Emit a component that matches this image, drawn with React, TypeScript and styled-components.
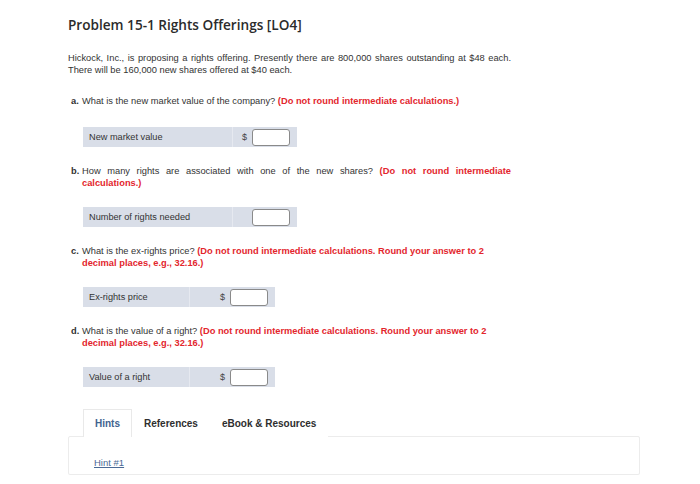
import styled, { createGlobalStyle } from "styled-components";

type Question = {
	letter: string;
	text: string;
	note: string;
	justify: boolean;
	label: string;
	dollar: boolean;
	labelWidth: number;
	cellWidth: number;
};

const questions: Question[] = [
	{
		letter: "a.",
		text: "What is the new market value of the company?",
		note: "(Do not round intermediate calculations.)",
		justify: false,
		label: "New market value",
		dollar: true,
		labelWidth: 150,
		cellWidth: 64,
	},
	{
		letter: "b.",
		text: "How many rights are associated with one of the new shares?",
		note: "(Do not round intermediate calculations.)",
		justify: true,
		label: "Number of rights needed",
		dollar: false,
		labelWidth: 150,
		cellWidth: 64,
	},
	{
		letter: "c.",
		text: "What is the ex-rights price?",
		note: "(Do not round intermediate calculations. Round your answer to 2 decimal places, e.g., 32.16.)",
		justify: false,
		label: "Ex-rights price",
		dollar: true,
		labelWidth: 107,
		cellWidth: 85,
	},
	{
		letter: "d.",
		text: "What is the value of a right?",
		note: "(Do not round intermediate calculations. Round your answer to 2 decimal places, e.g., 32.16.)",
		justify: false,
		label: "Value of a right",
		dollar: true,
		labelWidth: 107,
		cellWidth: 85,
	},
];

const GlobalStyle = createGlobalStyle`
  body {
    margin: 0;
    background: #ffffff;
    font-family: "Liberation Sans", Arial, sans-serif;
    color: #333333;
  }
`;

const Page = styled.div`
  padding: 15px 0 0 68px;
  width: 572px;
`;

const Title = styled.h1`
  margin: 0;
  font-family: "Open Sans", "Liberation Sans", sans-serif;
  font-size: 13.6px;
  font-weight: 600;
  line-height: 20px;
  color: #2b2b2b;
`;

const Intro = styled.p`
  margin: 17px 0 0;
  width: 443px;
  font-size: 9.3px;
  line-height: 12px;
  text-align: justify;
`;

const QuestionBlock = styled.div<{ $first: boolean }>`
  display: flex;
  margin-top: ${(p) => (p.$first ? 19 : 18)}px;
  width: 440px;
  padding-left: 3px;
  font-size: 9.3px;
  line-height: 12px;
`;

const Letter = styled.span`
  flex: 0 0 11px;
  font-weight: 700;
`;

const QuestionText = styled.div<{ $justify: boolean }>`
  flex: 1;
  text-align: ${(p) => (p.$justify ? "justify" : "left")};
`;

const Note = styled.span`
  color: #e3262d;
  font-weight: 700;
`;

const AnswerRow = styled.div<{ $top: number }>`
  display: flex;
  width: max-content;
  height: 20px;
  margin: ${(p) => p.$top}px 0 0 15px;
  background: #d9dee8;
  font-size: 9.2px;
`;

const LabelCell = styled.div<{ $width: number }>`
  display: flex;
  align-items: center;
  width: ${(p) => p.$width}px;
  padding-left: 6px;
  box-sizing: border-box;
  border-right: 1px solid #e6e9f0;
`;

const InputCell = styled.div<{ $width: number }>`
  display: flex;
  align-items: center;
  justify-content: flex-end;
  gap: 5px;
  width: ${(p) => p.$width}px;
  padding-right: 7px;
  box-sizing: border-box;
`;

const Dollar = styled.span`
  font-size: 9px;
  color: #444444;
`;

const AnswerInput = styled.input`
  width: 38px;
  height: 17px;
  box-sizing: border-box;
  margin: 0;
  padding: 0 3px;
  border: 1px solid #8a8a8a;
  border-radius: 3px;
  background: #ffffff;
`;

const Resources = styled.div`
  margin-top: 22px;
`;

const TabBar = styled.div`
  display: flex;
  padding-left: 15px;
  height: 27px;
`;

const Tab = styled.div<{ $active: boolean }>`
  display: flex;
  align-items: center;
  padding: 0 11px;
  font-size: 10px;
  font-weight: 700;
  color: ${(p) => (p.$active ? "#41638f" : "#2e2e2e")};
  background: #ffffff;
  border: 1px solid ${(p) => (p.$active ? "#e9e9e9" : "transparent")};
  border-bottom: none;
  position: relative;
  z-index: 1;
  margin-bottom: -1px;
  height: 28px;
  box-sizing: border-box;
`;

const Panel = styled.div`
  width: 572px;
  height: 39px;
  box-sizing: border-box;
  border: 1px solid #ececec;
  border-radius: 2px;
  padding: 15px 0 0 25px;
  box-shadow: 0 1px 1px rgba(0, 0, 0, 0.03);
`;

const HintLink = styled.a`
  font-size: 9.5px;
  color: #4a6a96;
  text-decoration: underline;
`;

export default function App() {
	return (
		<>
			<GlobalStyle />
			<Page>
				<Title>Problem 15-1 Rights Offerings [LO4]</Title>
				<Intro>
					Hickock, Inc., is proposing a rights offering. Presently there are
					800,000 shares outstanding at $48 each. There will be 160,000 new
					shares offered at $40 each.
				</Intro>
				{questions.map((q, i) => (
					<div key={q.letter}>
						<QuestionBlock $first={i === 0}>
							<Letter>{q.letter}</Letter>
							<QuestionText $justify={q.justify}>
								{q.text} <Note>{q.note}</Note>
							</QuestionText>
						</QuestionBlock>
						<AnswerRow $top={i === 0 ? 20 : 18}>
							<LabelCell $width={q.labelWidth}>{q.label}</LabelCell>
							<InputCell $width={q.cellWidth}>
								{q.dollar && <Dollar>$</Dollar>}
								<AnswerInput type="text" />
							</InputCell>
						</AnswerRow>
					</div>
				))}
				<Resources>
					<TabBar>
						<Tab $active>Hints</Tab>
						<Tab $active={false}>References</Tab>
						<Tab $active={false}>eBook &amp; Resources</Tab>
					</TabBar>
					<Panel>
						<HintLink href="#">Hint #1</HintLink>
					</Panel>
				</Resources>
			</Page>
		</>
	);
}
